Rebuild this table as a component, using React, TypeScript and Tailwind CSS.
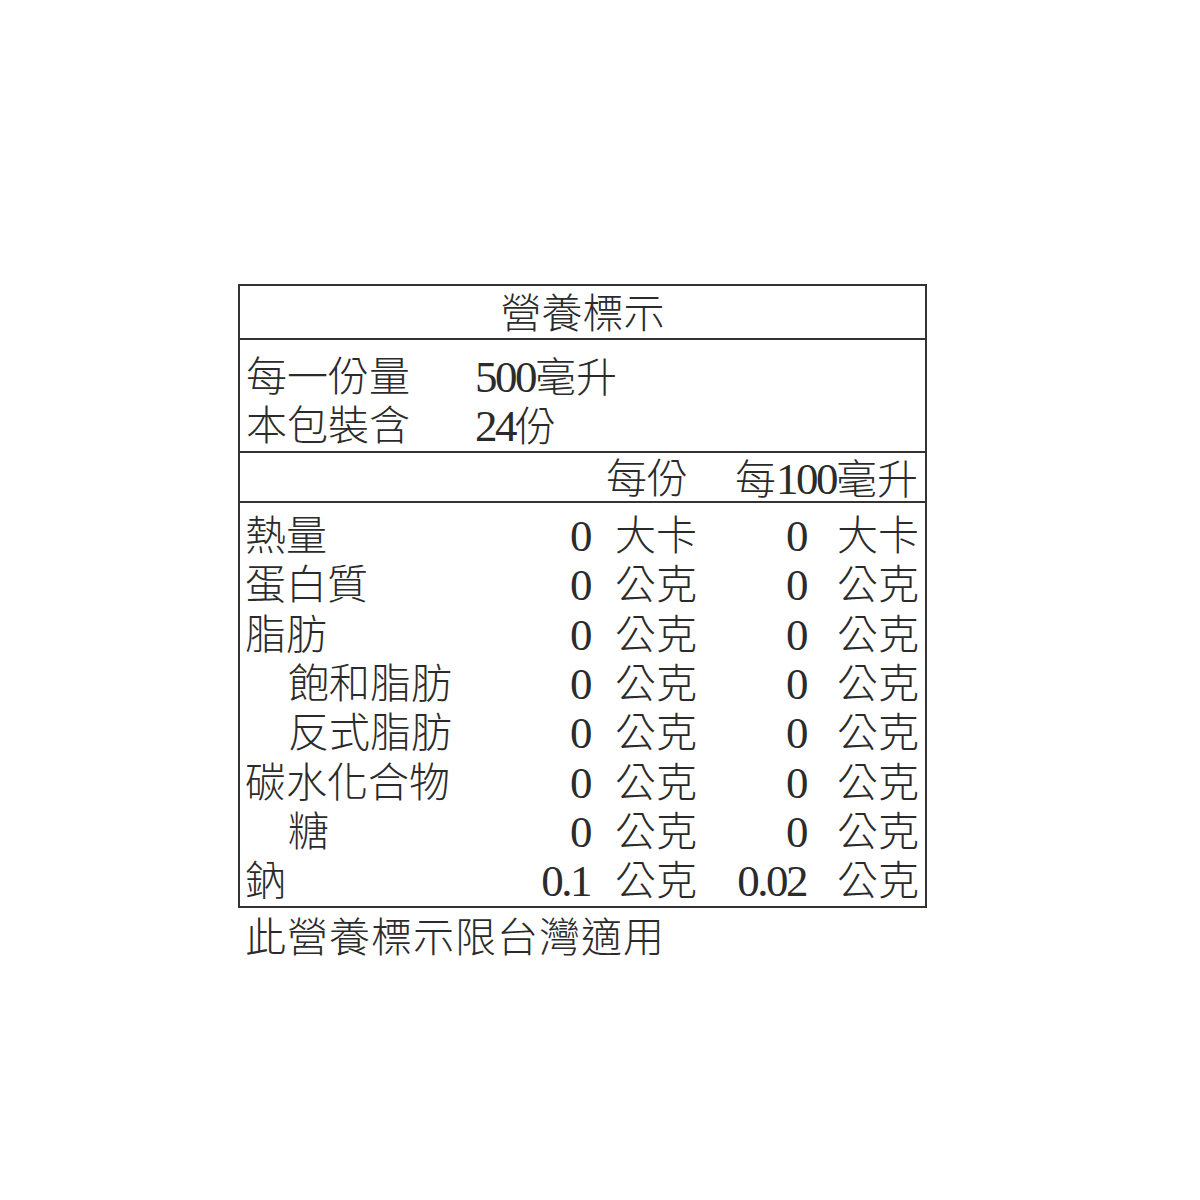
import React from "react";

const rows = [
    { name: "熱量", indent: false, v1: "0", u1: "大卡", v2: "0", u2: "大卡" },
    { name: "蛋白質", indent: false, v1: "0", u1: "公克", v2: "0", u2: "公克" },
    { name: "脂肪", indent: false, v1: "0", u1: "公克", v2: "0", u2: "公克" },
    { name: "飽和脂肪", indent: true, v1: "0", u1: "公克", v2: "0", u2: "公克" },
    { name: "反式脂肪", indent: true, v1: "0", u1: "公克", v2: "0", u2: "公克" },
    { name: "碳水化合物", indent: false, v1: "0", u1: "公克", v2: "0", u2: "公克" },
    { name: "糖", indent: true, v1: "0", u1: "公克", v2: "0", u2: "公克" },
    { name: "鈉", indent: false, v1: "0.1", u1: "公克", v2: "0.02", u2: "公克" },
];

// tall narrow digits like the printed label
function Num({ children }: { children: React.ReactNode }) {
    return <span className="text-[45px] tracking-[-2.5px]">{children}</span>;
}

function App() {
    return (
        <div
            className="min-h-[1200px] bg-white pt-[284px] pl-[238px] text-[41px] font-light text-[#2b2b2b] whitespace-nowrap"
            style={{ fontFamily: '"Liberation Serif", "Noto Sans CJK TC", serif' }}
        >
            <div className="w-[689px]">
                <div className="border-2 border-[#333]">
                    {/* title */}
                    <div className="h-[54px] pt-[4px] flex items-center justify-center border-b-2 border-[#333] leading-none">
                        營養標示
                    </div>

                    {/* serving info */}
                    <div className="h-[113px] pt-[13px] pl-[6px] border-b-2 border-[#333]">
                        <div className="grid grid-cols-[229px_1fr] h-[49px] items-center leading-none">
                            <div>每一份量</div>
                            <div><Num>500</Num>毫升</div>
                        </div>
                        <div className="grid grid-cols-[229px_1fr] h-[49px] items-center leading-none">
                            <div>本包裝含</div>
                            <div><Num>24</Num>份</div>
                        </div>
                    </div>

                    {/* column header */}
                    <div className="h-[50px] pt-[4px] pl-[7px] grid grid-cols-[283px_170px_218px] items-center border-b-2 border-[#333] leading-none">
                        <div></div>
                        <div className="text-right pr-[12px]">每份</div>
                        <div className="text-right">每<Num>100</Num>毫升</div>
                    </div>

                    {/* nutrients */}
                    <div className="pt-[9px] pl-[7px]">
                        {rows.map((row, index) => (
                            <div
                                key={index}
                                className="grid grid-cols-[283px_62px_108px_108px_112px] h-[49.3px] items-center leading-none"
                            >
                                <div className={row.indent ? "pl-[41px]" : "-ml-[2px]"}>{row.name}</div>
                                <div className="text-right pr-[2px]"><Num>{row.v1}</Num></div>
                                <div className="pl-[23px]">{row.u1}</div>
                                <div className="text-right pr-[2px]"><Num>{row.v2}</Num></div>
                                <div className="pl-[29px]">{row.u2}</div>
                            </div>
                        ))}
                    </div>
                </div>
                <div className="mt-[5px] pl-[7px] h-[50px] flex items-center leading-none tracking-[1px]">
                    此營養標示限台灣適用
                </div>
            </div>
        </div>
    );
}

export default App;
